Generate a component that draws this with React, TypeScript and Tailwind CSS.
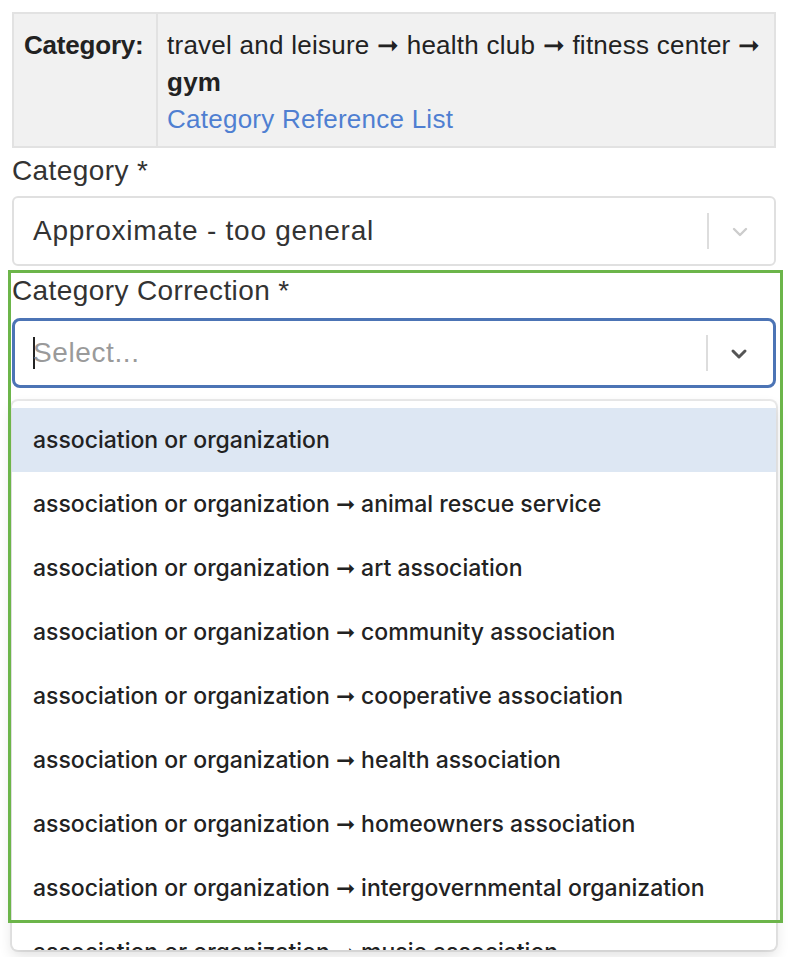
import React from "react"

const options = [
  "association or organization",
  "association or organization ➞ animal rescue service",
  "association or organization ➞ art association",
  "association or organization ➞ community association",
  "association or organization ➞ cooperative association",
  "association or organization ➞ health association",
  "association or organization ➞ homeowners association",
  "association or organization ➞ intergovernmental organization",
  "association or organization ➞ music association",
]

function Chevron({ dark }: { dark?: boolean }) {
  return (
    <svg width="18" height="12" viewBox="0 0 18 12" fill="none">
      <path d="M3 3l6 6 6-6" stroke={dark ? "#555" : "#ccc"} strokeWidth={dark ? 3 : 2.4} strokeLinecap="round" strokeLinejoin="round" />
    </svg>
  )
}

export default function App() {
  return (
    <div className="relative w-[788px] h-[957px] overflow-hidden bg-white px-3 pt-3 text-[#333]" style={{ fontFamily: '"Liberation Sans", Arial, sans-serif' }}>
      {/* Category summary table */}
      <div className="flex border-2 border-[#e2e2e2] bg-[#f1f1f1]">
        <div className="w-[144px] shrink-0 border-r-2 border-[#e2e2e2] pl-[10px] pt-[13px] text-[26px] font-bold leading-[37px] tracking-[-0.2px] text-[#222]">Category:</div>
        <div className="flex-1 whitespace-nowrap pl-[9px] pt-[13px] pb-[8px] text-[26px] leading-[37px] tracking-[0.25px] text-[#222]">
          <div>travel and leisure ➞ health club ➞ fitness center ➞</div>
          <div className="font-bold">gym</div>
          <div className="text-[#4f7fd1]">Category Reference List</div>
        </div>
      </div>

      <div className="pt-[8px] text-[28px] leading-[30px] tracking-[0.4px]">Category *</div>
      <div className="mt-[10px] flex h-[70px] items-center rounded-[6px] border-2 border-[#e0e0e0] bg-white pl-[19px] pr-[25px]">
        <div className="flex-1 text-[28px] tracking-[0.75px]">Approximate - too general</div>
        <div className="h-[36px] w-[2px] bg-[#ddd]" />
        <div className="ml-[22px] mt-[2px]"><Chevron /></div>
      </div>

      <div className="pt-[10px] text-[28px] leading-[30px] tracking-[0.4px]">Category Correction *</div>
      <div className="mt-[12px] flex h-[70px] items-center rounded-[8px] border-[3px] border-[#4c74b5] bg-white pl-[18px] pr-[25px]">
        <div className="flex flex-1 items-center text-[28px] tracking-[0.6px] text-[#9a9a9a]">
          <span className="inline-block h-[32px] w-[2px] bg-[#222]" />
          <span className="ml-[-2px]">Select...</span>
        </div>
        <div className="h-[36px] w-[2px] bg-[#ddd]" />
        <div className="ml-[22px] mt-[2px]"><Chevron dark /></div>
      </div>

      {/* Open menu */}
      <div className="mt-[13px] h-[549px] overflow-hidden rounded-[6px] bg-white pt-[7px] shadow-[0_0_0_2px_rgba(0,0,0,0.08),0_6px_14px_rgba(0,0,0,0.12)]" style={{ fontFamily: 'Inter, "Noto Sans", sans-serif' }}>
        {options.map((o, i) => (
          <div key={o} className={`flex h-[64px] items-center whitespace-nowrap pl-[21px] text-[23px] font-medium text-[#222] ${i === 0 ? "bg-[#dde7f3]" : ""}`}>
            {o}
          </div>
        ))}
      </div>

      {/* Green annotation frame */}
      <div className="pointer-events-none absolute left-[8px] top-[270px] h-[653px] w-[775px] border-[3px] border-[#6cb54a]" />
    </div>
  )
}
